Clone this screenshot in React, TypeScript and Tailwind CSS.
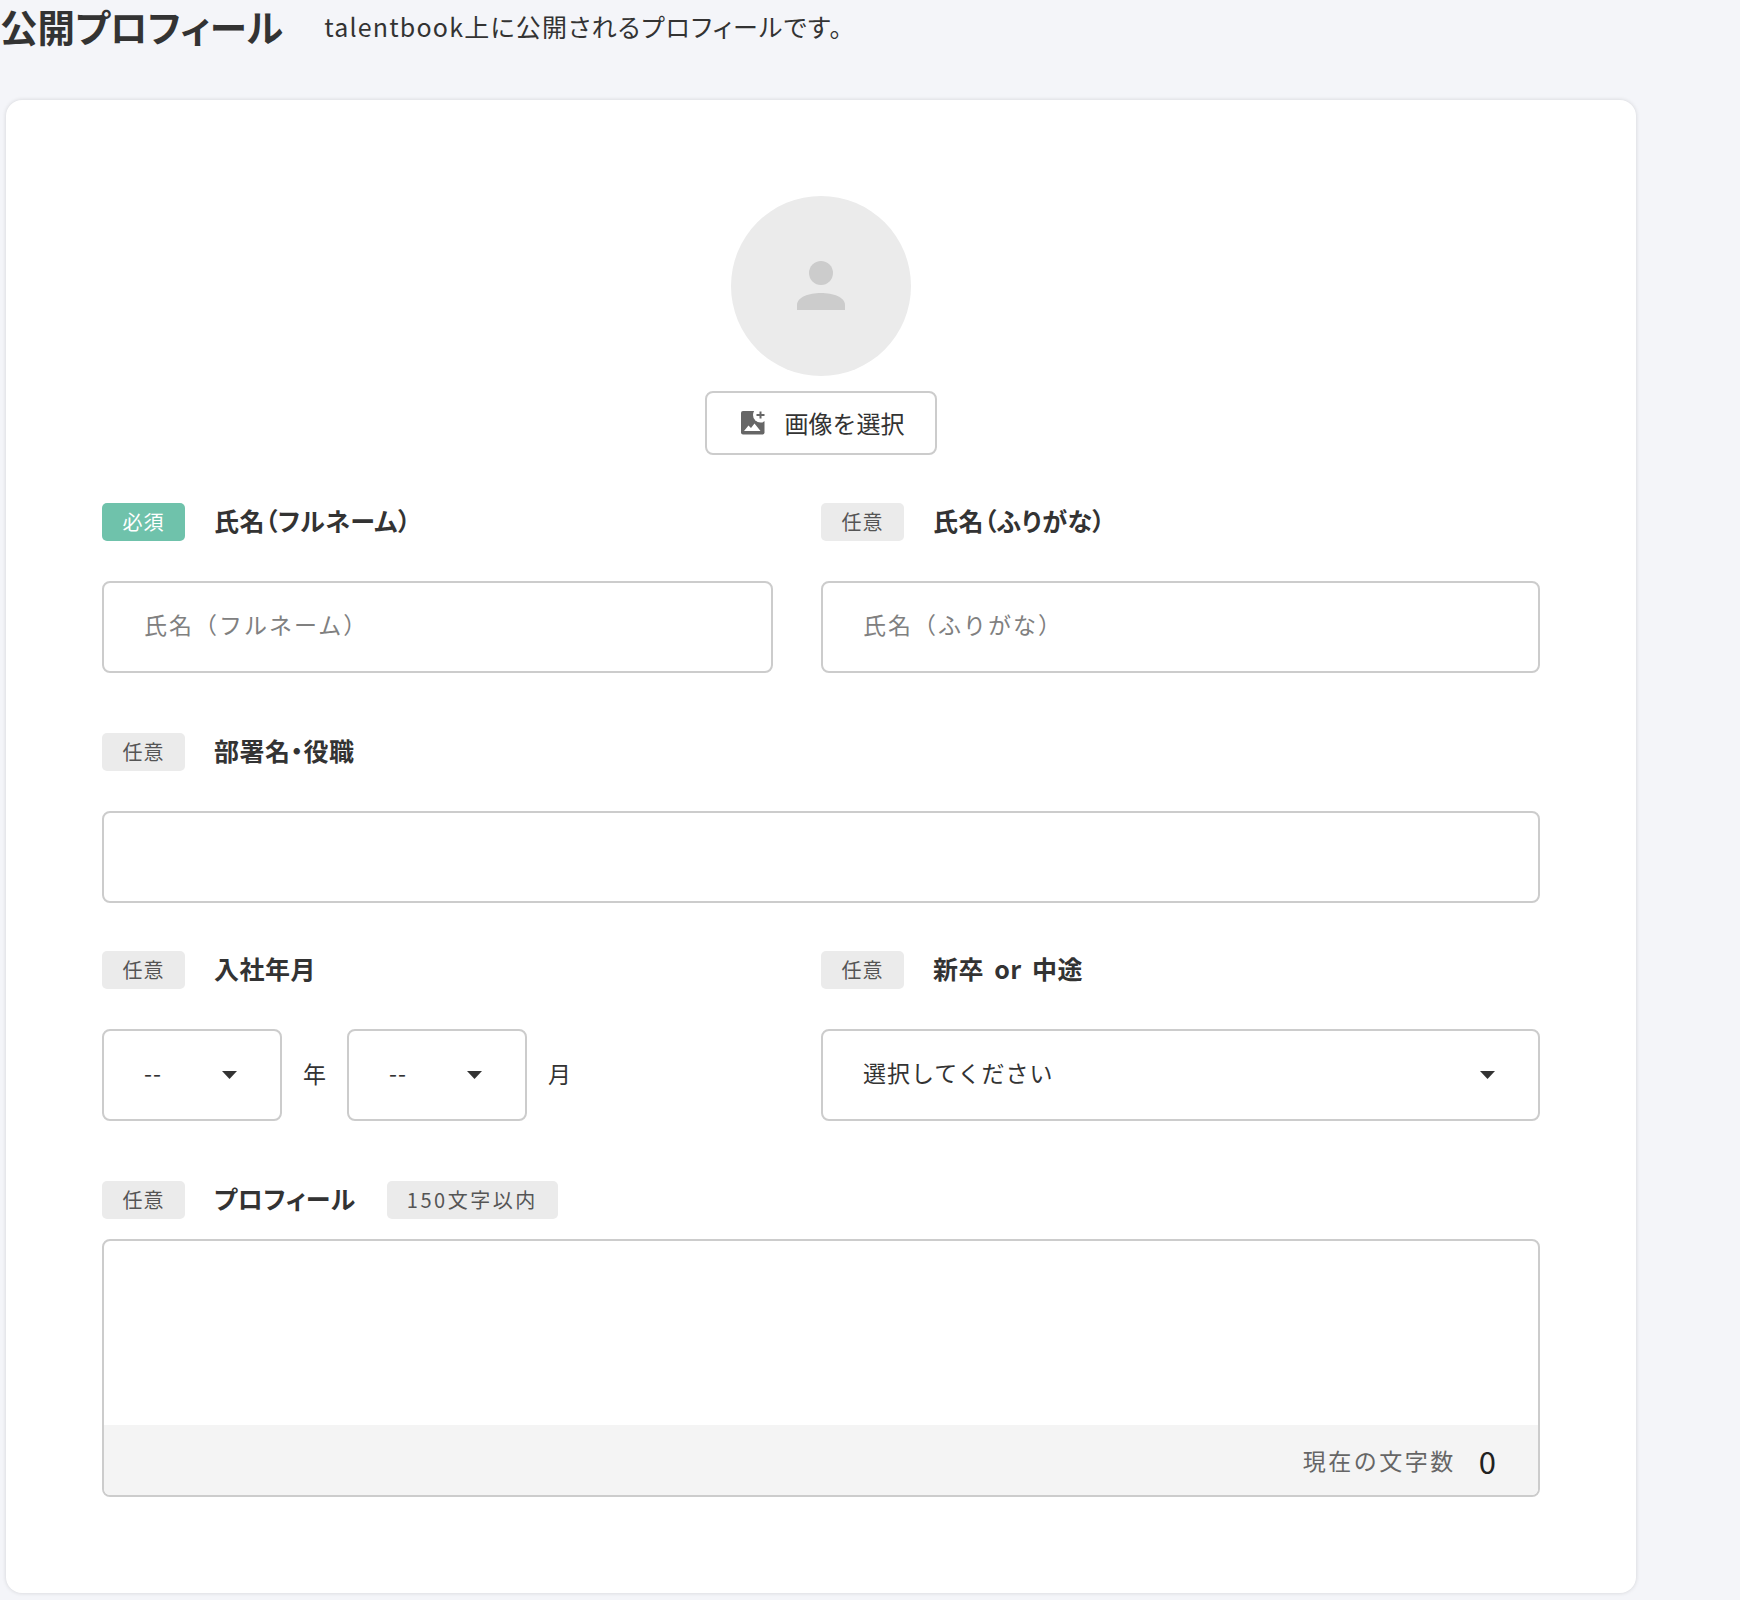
import React from 'react';

const Badge: React.FC<{ required?: boolean }> = ({ required }) => (
  <span
    className={`flex h-[38px] w-[83px] shrink-0 items-center justify-center rounded-[5px] pb-[1px] text-[20px] tracking-[1px] ${
      required ? 'bg-[#6fc2ab] text-white' : 'bg-[#ebebeb] text-[#555555]'
    }`}
  >
    {required ? '必須' : '任意'}
  </span>
);

const FieldLabel: React.FC<{ required?: boolean; label: string; children?: React.ReactNode }> = ({
  required,
  label,
  children,
}) => (
  <div className="flex h-[38px] items-center">
    <Badge required={required} />
    <span className="ml-[29px] pb-[4px] text-[25px] leading-none font-bold tracking-[0.5px] text-[#333333] [font-feature-settings:'palt'] [word-spacing:4px]">
      {label}
    </span>
    {children}
  </div>
);

const TextField: React.FC<{ placeholder?: string }> = ({ placeholder }) => (
  <input
    type="text"
    placeholder={placeholder}
    className="block h-[92px] w-full rounded-[8px] border-2 border-[#cccccc] bg-white px-[40px] pb-[6px] text-[23px] tracking-[1px] outline-none placeholder:tracking-[2px] placeholder:text-[#808080]"
  />
);

const Caret = () => (
  <svg width="15" height="8" viewBox="0 0 15 8" className="shrink-0">
    <path d="M0 0h15L7.5 8z" fill="#333333" />
  </svg>
);

const SelectBox: React.FC<{ value: string; className: string }> = ({ value, className }) => (
  <div
    className={`flex h-[92px] items-center justify-between rounded-[8px] border-2 border-[#cccccc] bg-white pr-[43px] pl-[40px] text-[23px] tracking-[1px] text-[#333333] ${className}`}
  >
    <span className="pb-[6px]">{value}</span>
    <Caret />
  </div>
);

export default function App() {
  return (
    <div className="min-h-[1600px] bg-[#f4f5f9] font-['Noto_Sans_CJK_JP','Noto_Sans',sans-serif] text-[#333333]">
      <div className="flex h-[100px] items-start">
        <h1 className="mt-[1px] text-[37.5px] leading-[50px] font-bold [font-feature-settings:'palt']">公開プロフィール</h1>
        <p className="mt-[8px] ml-[41px] text-[25px] leading-[36px] tracking-[1.2px] [font-feature-settings:'palt']">
          talentbook上に公開されるプロフィールです。
        </p>
      </div>

      <main className="ml-[6px] h-[1493px] w-[1630px] rounded-[16px] bg-white px-[96px] pt-[96px] shadow-[0_0_4px_rgba(0,0,0,0.14)]">
        <div className="flex flex-col items-center">
          <div className="flex h-[180px] w-[180px] items-center justify-center rounded-full bg-[#ebebeb]">
            <svg width="50" height="50" viewBox="0 0 50 50">
              <circle cx="25" cy="12" r="12" fill="#cccccc" />
              <path d="M1 49v-5c0-8 12-12 24-12s24 4 24 12v5z" fill="#cccccc" />
            </svg>
          </div>
          <button className="mt-[15px] flex h-[64px] w-[232px] items-center justify-center rounded-[8px] border-2 border-[#cccccc] bg-white pb-[1px] pl-[3px] text-[24px] text-[#333333]">
            <svg width="24" height="24" viewBox="0 0 24 24" className="mt-[1px] mr-[20px]">
              <rect x="0" y="0" width="23.5" height="23.5" rx="2" fill="#666666" />
              <circle cx="19.5" cy="4" r="7.5" fill="#ffffff" />
              <path d="M18.5 0.5h2v2.5h3v2h-3v2.5h-2V5h-3V3h3z" fill="#666666" />
              <path d="M3 20l4.5-5.5 2.5 2.5 3.5-4.5 6 7.5z" fill="#ffffff" />
            </svg>
            画像を選択
          </button>
        </div>

        <div className="mt-[48px] flex gap-[48px]">
          <div className="w-[671px]">
            <FieldLabel required label="氏名（フルネーム）" />
            <div className="mt-[40px]">
              <TextField placeholder="氏名（フルネーム）" />
            </div>
          </div>
          <div className="w-[719px]">
            <FieldLabel label="氏名（ふりがな）" />
            <div className="mt-[40px]">
              <TextField placeholder="氏名（ふりがな）" />
            </div>
          </div>
        </div>

        <div className="mt-[60px]">
          <FieldLabel label="部署名・役職" />
          <div className="mt-[40px]">
            <TextField />
          </div>
        </div>

        <div className="mt-[48px] flex gap-[48px]">
          <div className="w-[671px]">
            <FieldLabel label="入社年月" />
            <div className="mt-[40px] flex items-center">
              <SelectBox value="--" className="w-[180px]" />
              <span className="mr-[21px] ml-[21px] pb-[4px] text-[23px]">年</span>
              <SelectBox value="--" className="w-[180px]" />
              <span className="ml-[21px] pb-[4px] text-[23px]">月</span>
            </div>
          </div>
          <div className="w-[719px]">
            <FieldLabel label="新卒 or 中途" />
            <div className="mt-[40px]">
              <SelectBox value="選択してください" className="w-full" />
            </div>
          </div>
        </div>

        <div className="mt-[60px]">
          <FieldLabel label="プロフィール">
            <span className="ml-[31px] flex h-[38px] w-[171px] items-center justify-center rounded-[5px] bg-[#ebebeb] text-[20px] tracking-[2.5px] text-[#555555]">
              150文字以内
            </span>
          </FieldLabel>
          <div className="mt-[20px] flex h-[258px] flex-col overflow-hidden rounded-[8px] border-2 border-[#cccccc] bg-white">
            <textarea className="block w-full flex-1 resize-none outline-none" />
            <div className="flex h-[70px] items-center justify-end bg-[#f4f4f4] pr-[42px]">
              <span className="text-[23px] tracking-[2.5px] text-[#666666]">現在の文字数</span>
              <span className="ml-[23px] text-[31px] leading-none text-[#222222]">0</span>
            </div>
          </div>
        </div>
      </main>
    </div>
  );
}
